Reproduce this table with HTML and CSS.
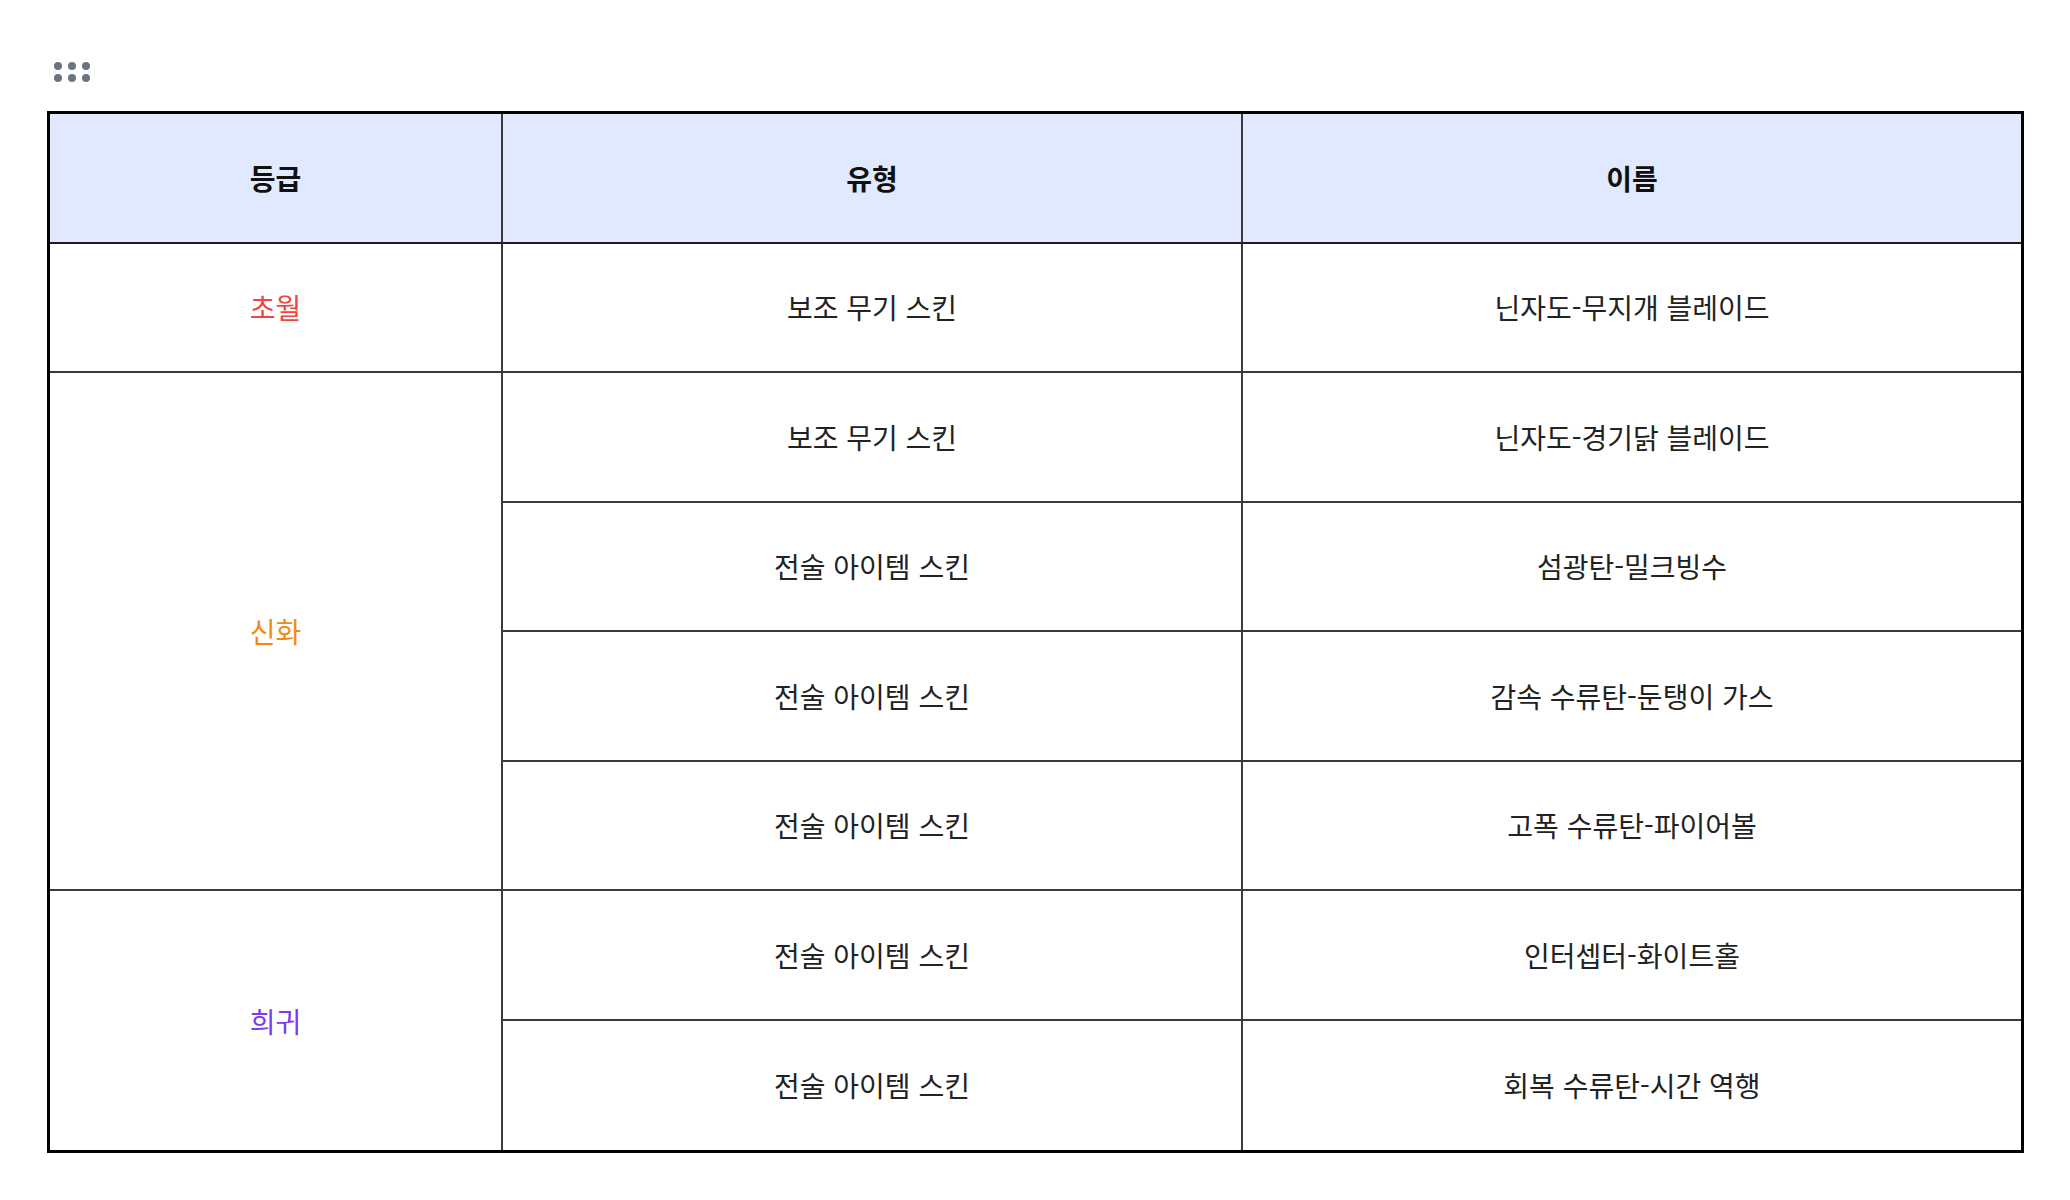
FILE: index.html
```html
<!DOCTYPE html>
<html lang="ko">
<head>
<meta charset="utf-8">
<title>등급표</title>
<link rel="stylesheet" href="styles.css">
</head>
<body>
<div class="page">
  <div class="toolbar">
    <svg class="grip" width="36" height="20" viewBox="0 0 36 20" aria-hidden="true">
      <circle cx="4" cy="4" r="4"/><circle cx="18" cy="4" r="4"/><circle cx="32" cy="4" r="4"/>
      <circle cx="4" cy="16" r="4"/><circle cx="18" cy="16" r="4"/><circle cx="32" cy="16" r="4"/>
    </svg>
  </div>
  <table class="grid">
    <thead>
      <tr>
        <th class="c1">등급</th>
        <th class="c2">유형</th>
        <th class="c3 last-col">이름</th>
      </tr>
    </thead>
    <tbody>
      <tr>
        <td class="grade transcend">초월</td>
        <td>보조 무기 스킨</td>
        <td class="last-col">닌자도-무지개 블레이드</td>
      </tr>
      <tr>
        <td class="grade myth" rowspan="4">신화</td>
        <td>보조 무기 스킨</td>
        <td class="last-col">닌자도-경기닭 블레이드</td>
      </tr>
      <tr>
        <td>전술 아이템 스킨</td>
        <td class="last-col">섬광탄-밀크빙수</td>
      </tr>
      <tr>
        <td>전술 아이템 스킨</td>
        <td class="last-col">감속 수류탄-둔탱이 가스</td>
      </tr>
      <tr>
        <td>전술 아이템 스킨</td>
        <td class="last-col">고폭 수류탄-파이어볼</td>
      </tr>
      <tr>
        <td class="grade rare last-row" rowspan="2">희귀</td>
        <td>전술 아이템 스킨</td>
        <td class="last-col">인터셉터-화이트홀</td>
      </tr>
      <tr>
        <td class="last-row">전술 아이템 스킨</td>
        <td class="last-col last-row">회복 수류탄-시간 역행</td>
      </tr>
    </tbody>
  </table>
</div>
</body>
</html>
```
FILE: styles.css
```css
html, body {
  margin: 0;
  padding: 0;
  background: #ffffff;
}

body {
  font-family: "Noto Sans CJK KR", "Noto Sans", sans-serif;
  color: #1f1f1f;
}

.page {
  padding: 62px 0 0 47px;
}

.toolbar {
  height: 20px;
  padding-left: 7px;
  margin-bottom: 29px;
  display: flex;
}

.grip {
  display: block;
  fill: #6b7280;
}

.grid {
  border-collapse: separate;
  border-spacing: 0;
  table-layout: fixed;
  width: 1977px;
  border: 3px solid #000000;
}

.grid tr {
  height: 129.5px;
}

.grid th,
.grid td {
  box-sizing: border-box;
  padding: 0;
  text-align: center;
  vertical-align: middle;
  font-size: 28px;
  border-right: 2px solid #3a3a3a;
  border-bottom: 2px solid #3a3a3a;
}

.grid th {
  background: #e0e9fe;
  font-weight: 700;
  color: #111111;
  border-bottom-color: #1e1e1e;
}

.grid td {
  font-weight: 400;
  color: #222222;
}

.grid .c1 { width: 453px; }
.grid .c2 { width: 740px; }
.grid .c3 { width: 778px; }

.grid .last-col { border-right: none; }
.grid .last-row { border-bottom: none; }

.grade.transcend { color: #ef4444; }
.grade.myth { color: #f18a12; }
.grade.rare { color: #7c3aed; }
```
